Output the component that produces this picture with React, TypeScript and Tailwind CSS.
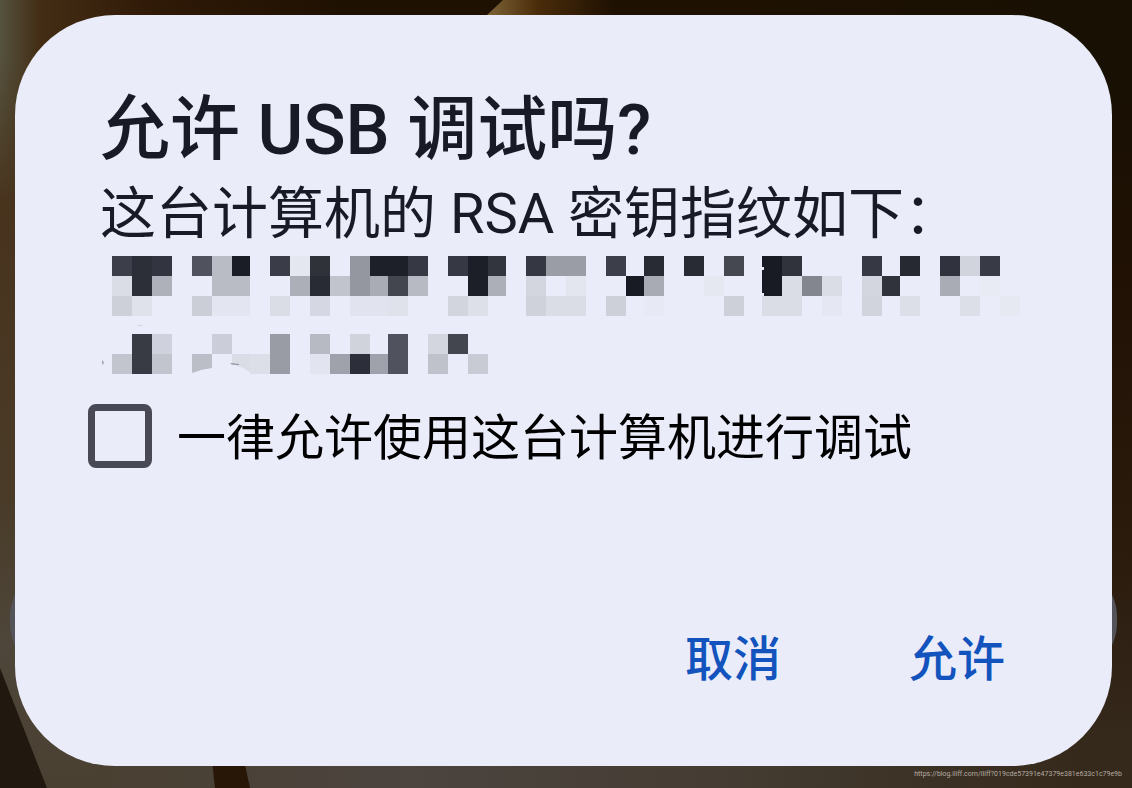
import { useState } from "react";

// x, y, width, height, colour
type Block = [number, number, number, number, string];

const blocks: Block[] = [
  [12, 0, 20, 20, "#3c3f49"],
  [32, 0, 20, 40, "#2c2e38"],
  [52, 0, 20, 20, "#32343f"],
  [92, 0, 20, 20, "#50525d"],
  [112, 0, 20, 20, "#b9bbc5"],
  [132, 0, 18, 20, "#1a1c26"],
  [170, 0, 20, 20, "#3a3c47"],
  [190, 0, 20, 20, "#e4e6f0"],
  [210, 0, 20, 20, "#30323a"],
  [250, 0, 20, 40, "#9496a0"],
  [270, 0, 38, 20, "#1d1f29"],
  [308, 0, 20, 20, "#363843"],
  [348, 0, 20, 20, "#363843"],
  [368, 0, 20, 40, "#1c1e28"],
  [388, 0, 18, 20, "#32343e"],
  [426, 0, 20, 20, "#353742"],
  [446, 0, 40, 20, "#9a9ca6"],
  [506, 0, 20, 20, "#3c3f49"],
  [544, 0, 20, 20, "#282a34"],
  [584, 0, 20, 20, "#282a34"],
  [624, 0, 20, 20, "#454751"],
  [662, 0, 20, 40, "#181a24"],
  [682, 0, 20, 20, "#30323c"],
  [762, 0, 20, 20, "#363843"],
  [800, 0, 20, 20, "#262832"],
  [840, 0, 20, 20, "#30323d"],
  [860, 0, 20, 20, "#d2d4dd"],
  [880, 0, 20, 20, "#383a45"],

  [12, 20, 20, 20, "#dadce6"],
  [52, 20, 20, 20, "#aeb0ba"],
  [112, 20, 38, 20, "#b9bbc5"],
  [190, 20, 20, 20, "#acaeb8"],
  [210, 20, 20, 20, "#282a34"],
  [230, 20, 20, 20, "#c1c3cd"],
  [270, 20, 18, 20, "#a9abb5"],
  [288, 20, 20, 20, "#44464f"],
  [308, 20, 20, 20, "#b7b9c3"],
  [388, 20, 18, 20, "#acaeb8"],
  [426, 20, 20, 20, "#d3d5df"],
  [466, 20, 20, 20, "#e3e5ef"],
  [526, 20, 18, 20, "#181a24"],
  [544, 20, 20, 20, "#a8aab4"],
  [604, 20, 20, 20, "#e5e7f1"],
  [682, 20, 20, 20, "#dadce6"],
  [702, 20, 20, 20, "#84868f"],
  [722, 20, 20, 20, "#dadce6"],
  [762, 20, 20, 20, "#d3d5df"],
  [782, 20, 18, 20, "#30323c"],
  [840, 20, 20, 20, "#a9abb5"],
  [880, 20, 20, 20, "#e8eaf4"],

  [12, 40, 20, 20, "#cdcfd9"],
  [32, 40, 20, 20, "#dfe1eb"],
  [92, 40, 20, 20, "#cbcdd7"],
  [112, 40, 38, 20, "#e3e5f0"],
  [170, 40, 20, 20, "#dadce6"],
  [210, 40, 20, 20, "#d5d7e2"],
  [250, 40, 38, 20, "#e1e3ee"],
  [288, 40, 20, 20, "#dfe1eb"],
  [348, 40, 20, 20, "#d2d4de"],
  [368, 40, 20, 20, "#dddfe9"],
  [426, 40, 20, 20, "#cfd1db"],
  [446, 40, 40, 20, "#dadce6"],
  [506, 40, 20, 20, "#cdcfd9"],
  [544, 40, 20, 20, "#e7e9f4"],
  [624, 40, 20, 20, "#cdcfd9"],
  [662, 40, 40, 20, "#dadce6"],
  [722, 40, 20, 20, "#e5e7f2"],
  [762, 40, 20, 20, "#d1d3dd"],
  [800, 40, 20, 20, "#dcdee8"],
  [860, 40, 20, 20, "#dcdee8"],
  [900, 40, 20, 20, "#e6e8f2"],

  [32, 78, 20, 40, "#383a44"],
  [52, 78, 20, 20, "#cfd1dc"],
  [112, 78, 20, 20, "#cbcdd8"],
  [170, 78, 20, 40, "#999ba5"],
  [210, 78, 20, 20, "#b7b9c3"],
  [250, 78, 20, 20, "#d0d2dc"],
  [288, 78, 20, 40, "#50525d"],
  [328, 78, 20, 20, "#d3d5df"],
  [348, 78, 20, 20, "#43454f"],

  [12, 98, 20, 20, "#c2c4ce"],
  [52, 98, 20, 20, "#c2c4ce"],
  [150, 98, 20, 20, "#dcdee8"],
  [210, 98, 20, 20, "#e2e4ef"],
  [230, 98, 20, 20, "#9fa1ab"],
  [250, 98, 20, 20, "#2c2e39"],
  [270, 98, 18, 20, "#9fa1ab"],
  [328, 98, 20, 20, "#bfc1cb"],
  [368, 98, 20, 20, "#c8cad4"],
];

const Fingerprint: React.FC = () => (
  <svg
    viewBox="0 0 920 118"
    className="block w-[920px] max-w-full"
    shapeRendering="crispEdges"
    aria-hidden="true"
  >
    {blocks.map(([x, y, width, height, fill]) => (
      <rect key={`${x}-${y}`} x={x} y={y} width={width} height={height} fill={fill} />
    ))}
    {/* partly wiped blocks and stray specks */}
    <g shapeRendering="auto">
      <path d="M92 98h20v14q-10 1-20 5z" fill="#bbbdc7" />
      <path d="M132 98h18v18q-8-5-18-8z" fill="#dadce6" />
      <path d="M130 107l9 1v1l-7-.5z" fill="#8b8d97" />
      <path d="M662 11h2v3h-2zM662 37h2v3h-2z" fill="#eaecf9" />
      <path d="M2 104l2 2-1 3-1-1z" fill="#a5a7b1" />
      <path d="M37 69h6l-3 1z" fill="#c8cad4" />
    </g>
  </svg>
);

const Wallpaper: React.FC = () => (
  <svg
    viewBox="0 0 1132 788"
    preserveAspectRatio="none"
    className="absolute inset-0 h-full w-full"
    aria-hidden="true"
  >
    <defs>
      <linearGradient id="top">
        <stop offset="0" stopColor="#55523f" />
        <stop offset="0.035" stopColor="#432d14" />
        <stop offset="0.14" stopColor="#2f1907" />
        <stop offset="0.3" stopColor="#1f1102" />
        <stop offset="0.6" stopColor="#1f1102" />
        <stop offset="1" stopColor="#171003" />
      </linearGradient>
      <linearGradient id="left" x2="0" y2="1">
        <stop offset="0" stopColor="#46351c" stopOpacity="0" />
        <stop offset="0.2" stopColor="#48331d" />
        <stop offset="0.6" stopColor="#493b28" />
        <stop offset="0.8" stopColor="#4e463a" />
        <stop offset="1" stopColor="#4a4032" />
      </linearGradient>
      <linearGradient id="right" x2="0" y2="1">
        <stop offset="0" stopColor="#171003" />
        <stop offset="0.3" stopColor="#201104" />
        <stop offset="0.7" stopColor="#2b1c0e" />
        <stop offset="0.93" stopColor="#35291b" />
      </linearGradient>
      <linearGradient id="bottom">
        <stop offset="0" stopColor="#4a4032" />
        <stop offset="0.3" stopColor="#4b443f" />
        <stop offset="0.6" stopColor="#453d33" />
        <stop offset="0.95" stopColor="#35291b" />
      </linearGradient>
      <linearGradient id="glow">
        <stop offset="0" stopColor="#7d6436" />
        <stop offset="0.4" stopColor="#4a2c0a" />
        <stop offset="1" stopColor="#1f1102" />
      </linearGradient>
    </defs>
    <rect width="1132" height="300" fill="url(#top)" />
    <path d="M503 0h110v15H487z" fill="url(#glow)" />
    <rect y="60" width="110" height="728" fill="url(#left)" />
    <rect x="1020" y="60" width="112" height="728" fill="url(#right)" />
    <rect x="100" y="740" width="1032" height="48" fill="url(#bottom)" />
    <path d="M0 668l47 120H0z" fill="#211810" />
    <path d="M212 760h32l6 28h-35z" fill="#281606" />
    <rect x="10" y="565" width="1107" height="110" rx="52" fill="#54535a" />
  </svg>
);

const App: React.FC = () => {
  const [always, setAlways] = useState(false);

  return (
    <main className="relative min-h-screen bg-[#2a1d10] pt-[15px] pr-5 pb-[22px] pl-[15px] font-[Roboto,'Noto_Sans_CJK_SC',sans-serif]">
      <Wallpaper />
      <section
        role="dialog"
        aria-labelledby="title"
        className="relative rounded-[100px] bg-[#eaecf9] px-[73px] pt-[71px] pb-[70px] text-[#181b26]"
      >
        <h1 id="title" className="pl-3 text-[70px] leading-[88px] font-medium">
          允许 USB 调试吗?
        </h1>
        <p className="pl-3 text-[56px] leading-[80px]">这台计算机的 RSA 密钥指纹如下：</p>
        <div className="mt-[2px] pl-3">
          <Fingerprint />
        </div>
        <label className="mt-[25px] flex items-center gap-[25px] text-[49px] leading-[68px] text-black">
          <input
            type="checkbox"
            checked={always}
            onChange={() => setAlways(!always)}
            className="size-16 shrink-0 appearance-none rounded-lg border-[7px] border-[#484955] checked:bg-[#484955]"
          />
          <span className="pt-[6px]">一律允许使用这台计算机进行调试</span>
        </label>
        <div className="mt-[151px] flex justify-end gap-32 pr-[34px] text-[48px] leading-[72px] font-medium text-[#1253bd]">
          <button type="button">取消</button>
          <button type="button">允许</button>
        </div>
      </section>
      <footer className="absolute right-[10px] bottom-2 text-[7px] leading-3 text-[#b5aca2]">
        https://blog.iliff.com/iliff?019cde57391e47379e381e633c1c79e9b
      </footer>
    </main>
  );
};

export default App;
